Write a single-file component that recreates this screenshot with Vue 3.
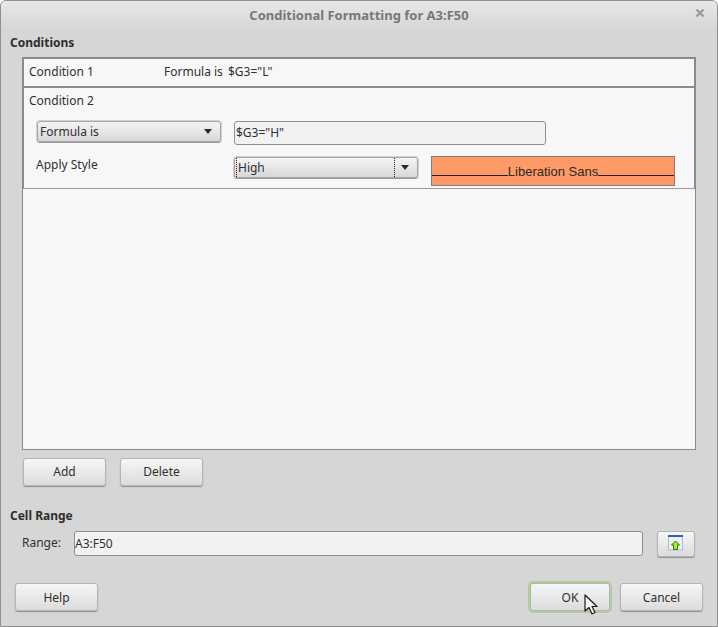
<script setup>
const cursor = "M1 1 L1 17 L5 13.5 L8 20 L11 18.5 L8 12.5 L13 12.5 Z";
</script>

<template>
  <div class="window">
    <header class="titlebar">
      <span class="title">Conditional Formatting for A3:F50</span>
      <svg class="close" width="10" height="10" viewBox="0 0 10 10">
        <path d="M1.5 1.5 L8.5 8.5 M8.5 1.5 L1.5 8.5" stroke="#9a9a9a" stroke-width="2.4" fill="none" />
      </svg>
    </header>

    <h2 class="heading conditions-heading">Conditions</h2>

    <div class="list">
      <div class="row-collapsed">
        <span class="cond-name">Condition 1</span>
        <span class="cond-kind">Formula is</span>
        <span>$G3="L"</span>
      </div>
      <div class="row-expanded">
        <div class="cond-title">Condition 2</div>
        <div class="line-formula">
          <div class="select select-type">
            <span>Formula is</span>
            <i class="arrow"></i>
          </div>
          <div class="entry entry-formula">$G3="H"</div>
        </div>
        <div class="line-style">
          <span class="apply-label">Apply Style</span>
          <div class="select select-style">
            <span class="style-value">High</span>
            <span class="style-toggle"><i class="arrow"></i></span>
          </div>
          <div class="preview">
            <span class="rule"></span>
            <span class="preview-text">Liberation Sans</span>
            <span class="rule"></span>
          </div>
        </div>
      </div>
    </div>

    <div class="list-actions">
      <button class="btn">Add</button>
      <button class="btn">Delete</button>
    </div>

    <h2 class="heading range-heading">Cell Range</h2>
    <div class="range-line">
      <span class="range-label">Range:</span>
      <div class="entry entry-range">A3:F50</div>
      <button class="btn btn-icon">
        <svg class="range-icon" width="16" height="16" viewBox="0 0 16 16">
          <rect x="0.5" y="0.5" width="14" height="14.5" fill="#eaf0f8" stroke="#a9bcd8" />
          <rect x="0" y="0" width="15" height="2" fill="#2f62b4" />
          <path d="M7.5 6 L11.5 10 L9.5 10 L9.5 14.5 L5.5 14.5 L5.5 10 L3.5 10 Z" fill="#a4ec2e" stroke="#2f7a10" stroke-width="1" stroke-linejoin="round" />
        </svg>
      </button>
    </div>

    <div class="footer">
      <button class="btn btn-footer">Help</button>
      <div class="footer-right">
        <button class="btn btn-footer btn-ok">OK</button>
        <button class="btn btn-footer">Cancel</button>
      </div>
    </div>

    <svg class="cursor" width="15" height="22" viewBox="0 0 15 22">
      <path :d="cursor" fill="#f4f4f4" stroke="#1c1c1c" stroke-width="1.2" stroke-linejoin="round" />
    </svg>
  </div>
</template>

<style scoped>
.window {
  position: relative;
  box-sizing: border-box;
  width: 718px;
  height: 627px;
  display: flex;
  flex-direction: column;
  background: #d6d6d6;
  border: 1px solid #8f8f8f;
  border-radius: 6px 6px 0 0;
  font-family: "Noto Sans", "Open Sans", sans-serif;
  font-size: 12px;
  line-height: 16px;
  color: #303030;
  overflow: hidden;
}
.titlebar {
  flex: none;
  box-sizing: border-box;
  height: 29px;
  padding-bottom: 2px;
  display: flex;
  align-items: center;
  justify-content: center;
  position: relative;
  background: linear-gradient(#e8e8e8, #d6d6d6);
}
.title {
  font-size: 13px;
  font-weight: 700;
  color: #787878;
}
.close {
  position: absolute;
  right: 12px;
  top: 7px;
}
.heading {
  margin: 0;
  font-size: 12px;
  line-height: 16px;
  font-weight: 700;
  color: #2e2e2e;
  padding-left: 9px;
}
.conditions-heading {
  margin-top: 5px;
}
.list {
  flex: none;
  box-sizing: border-box;
  width: 674px;
  height: 393px;
  margin: 6px 0 0 21px;
  background: #f7f7f7;
  border: 1px solid #8a8a8a;
  border-top-width: 2px;
  display: flex;
  flex-direction: column;
}
.row-collapsed {
  box-sizing: border-box;
  height: 29px;
  padding: 0 0 2px 5px;
  display: flex;
  align-items: center;
  border-left: 1px solid #8a8a8a;
  border-right: 1px solid #8a8a8a;
  border-bottom: 2px solid #8a8a8a;
}
.cond-name {
  width: 135px;
}
.cond-kind {
  width: 64px;
}
.row-expanded {
  box-sizing: border-box;
  height: 101px;
  padding: 5px 0 0 5px;
  border-left: 1px solid #8a8a8a;
  border-right: 1px solid #8a8a8a;
  border-bottom: 1px solid #9c9c9c;
}
.cond-title {
  height: 16px;
}
.line-formula {
  display: flex;
  align-items: flex-start;
  margin-top: 12px;
  padding-left: 8px;
}
.select {
  box-sizing: border-box;
  height: 21px;
  display: flex;
  align-items: center;
  border: 1px solid #a6a6a6;
  border-radius: 3px;
  background: linear-gradient(#f4f4f4, #d8d8d8);
  box-shadow: 0 1px 0 #9a9a9a, 0 0 0 1px #d2d2d2;
}
.select-type {
  width: 184px;
  padding: 0 8px 0 2px;
  justify-content: space-between;
}
.arrow {
  display: block;
  width: 0;
  height: 0;
  border-left: 4.5px solid transparent;
  border-right: 4.5px solid transparent;
  border-top: 5px solid #2a2a2a;
}
.entry {
  box-sizing: border-box;
  background: #f2f2f2;
  border: 1px solid #8e8e8e;
  border-radius: 3px;
  display: flex;
  align-items: center;
  padding-left: 1px;
}
.entry-formula {
  width: 312px;
  height: 24px;
  margin-left: 13px;
}
.line-style {
  display: flex;
  align-items: flex-start;
  margin-top: 11px;
  padding-left: 7px;
}
.apply-label {
  width: 198px;
  padding-top: 1px;
}
.select-style {
  width: 184px;
  padding-left: 1px;
  margin-top: 1px;
}
.style-value {
  flex: 1;
  border-left: 1px dotted #222;
  height: 19px;
  line-height: 19px;
  padding-left: 1px;
}
.style-toggle {
  box-sizing: border-box;
  width: 23px;
  height: 19px;
  padding-right: 3px;
  display: flex;
  align-items: center;
  justify-content: center;
  border-left: 1px dotted #222;
}
.preview {
  box-sizing: border-box;
  width: 244px;
  height: 30px;
  margin-left: 13px;
  background: #ff9966;
  border: 1px solid #808080;
  display: flex;
  align-items: center;
  font-family: "Liberation Sans", Arial, sans-serif;
  font-size: 13px;
  color: #2a2a2a;
  padding-top: 1px;
}
.rule {
  flex: 1;
  height: 1px;
  background: #222;
  margin-top: 8px;
}
.list-actions {
  display: flex;
  gap: 14px;
  margin: 8px 0 0 22px;
}
.btn {
  box-sizing: border-box;
  width: 83px;
  height: 28px;
  padding: 0;
  font: inherit;
  color: #303030;
  border: 1px solid #b4b4b4;
  border-radius: 3px;
  background: linear-gradient(#f6f6f6, #dcdcdc);
  box-shadow: 0 1px 1px #8f8f8f;
  display: flex;
  align-items: center;
  justify-content: center;
}
.btn-footer {
  padding-top: 1px;
}
.range-heading {
  margin-top: 22px;
}
.range-line {
  display: flex;
  align-items: flex-start;
  margin-top: 7px;
  padding-left: 21px;
}
.range-label {
  width: 52px;
  padding-top: 4px;
}
.entry-range {
  width: 569px;
  height: 25px;
  padding-left: 0;
}
.btn-icon {
  width: 38px;
  height: 26px;
  margin-left: 14px;
}
.range-icon {
  margin-bottom: 3px;
}
.footer {
  display: flex;
  justify-content: space-between;
  margin-top: 26px;
  padding: 0 14px;
}
.footer-right {
  display: flex;
  gap: 10px;
}
.btn-ok {
  width: 80px;
  box-shadow: 0 0 0 2px #b2cd98;
}
.cursor {
  position: absolute;
  left: 583px;
  top: 593px;
}
</style>
